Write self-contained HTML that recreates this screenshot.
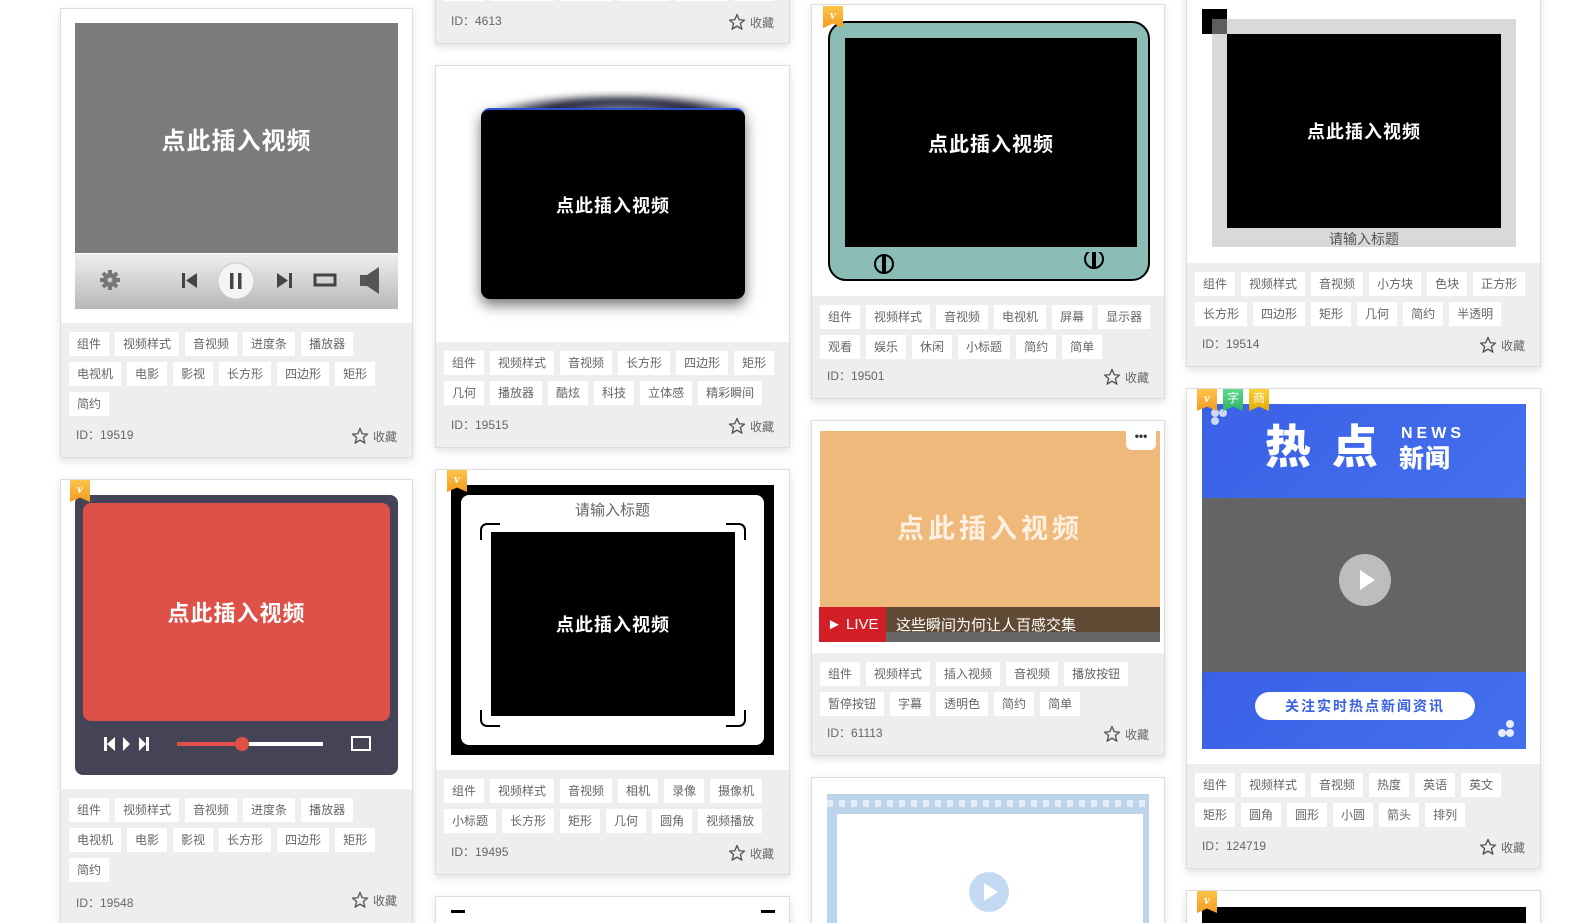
<!DOCTYPE html>
<html><head><meta charset="utf-8">
<style>
*{box-sizing:border-box;margin:0;padding:0}
html,body{width:1587px;height:923px;overflow:hidden;background:#fff}
body{font-family:"Liberation Sans","Noto Sans CJK SC",sans-serif}
#root{position:relative;width:1587px;height:923px;overflow:hidden}
.card{position:absolute;background:#fff;border:1px solid #ddd;box-shadow:0 3px 8px rgba(0,0,0,.12);overflow:hidden}
.ft{position:absolute;left:0;right:0;bottom:0;background:#eee;padding:9px 0 0 8px}
.ft span{float:left;background:#fff;height:24px;line-height:24px;padding:0 8px;margin:0 6px 6px 0;font-size:12px;color:#666}
.id{position:absolute;left:15px;bottom:14px;font-size:12px;color:#666}
.fav{position:absolute;right:15px;bottom:12px;font-size:12px;color:#666;display:flex;align-items:center;gap:4px}
.abs{position:absolute}
.vt{color:#fff;font-weight:bold;letter-spacing:1px;display:flex;align-items:center;justify-content:center}
.bdg{position:absolute;width:20px;height:22px;background:linear-gradient(#fcc34a,#f39c1f);clip-path:polygon(0 0,100% 0,100% 100%,50% 80%,0 100%);color:#fff;font:italic bold 13px/18px "Liberation Serif",serif;text-align:center}
</style></head><body><div id="root">

<div class="card" style="left:60px;top:8px;width:353px;height:450px">
  <div class="abs vt" style="left:14px;top:14px;width:323px;height:230px;background:#7b7b7b;font-size:24px">点此插入视频</div>
  <div class="abs" style="left:14px;top:245px;width:323px;height:55px;background:linear-gradient(#eeeeee,#b8b8b8)">
    <svg width="323" height="55" viewBox="0 0 323 55">
      <g fill="#777"><circle cx="35" cy="26" r="7"/><g stroke="#777" stroke-width="4"><line x1="35" y1="16" x2="35" y2="36"/><line x1="25" y1="26" x2="45" y2="26"/><line x1="28" y1="19" x2="42" y2="33"/><line x1="42" y1="19" x2="28" y2="33"/></g><circle cx="35" cy="26" r="2.5" fill="#ccc"/></g>
      <rect x="107" y="19" width="3" height="15" fill="#444"/><polygon points="122,19 122,34 111,26.5" fill="#444"/>
      <circle cx="161" cy="27" r="18" fill="#f4f4f4" stroke="#ccc"/><rect x="155" y="19" width="3.5" height="16" fill="#444"/><rect x="163" y="19" width="3.5" height="16" fill="#444"/>
      <polygon points="202,19 202,34 213,26.5" fill="#444"/><rect x="214" y="19" width="3" height="15" fill="#444"/>
      <rect x="240" y="21" width="20" height="10" fill="none" stroke="#444" stroke-width="3"/>
      <polygon points="285,21 292,21 304,13 304,40 292,32 285,32" fill="#555"/>
    </svg>
  </div>
  <div class="ft" style="top:314px"><span>组件</span><span>视频样式</span><span>音视频</span><span>进度条</span><span>播放器</span><span>电视机</span><span>电影</span><span>影视</span><span>长方形</span><span>四边形</span><span>矩形</span><span>简约</span></div>
  <div class="id">ID：19519</div>
  <div class="fav"><svg width="18" height="18" viewBox="0 0 24 24"><polygon points="12,2 15,9 22,9.5 16.5,14 18.5,21.5 12,17.5 5.5,21.5 7.5,14 2,9.5 9,9" fill="none" stroke="#555" stroke-width="1.8" stroke-linejoin="round"/></svg>收藏</div>
</div>

<div class="card" style="left:60px;top:479px;width:353px;height:450px">
  <div class="abs" style="left:14px;top:15px;width:323px;height:280px;background:#444456;border-radius:8px"></div>
  <div class="abs vt" style="left:22px;top:23px;width:307px;height:218px;background:#df5048;border-radius:8px;font-size:22px">点此插入视频</div>
  <svg class="abs" style="left:14px;top:245px" width="323" height="40" viewBox="0 0 323 40">
    <g fill="#fff"><rect x="29" y="12" width="3" height="14"/><polygon points="40,12 40,26 32,19"/><polygon points="48,12 48,26 55,19"/><polygon points="64,12 64,26 71,19"/><rect x="71" y="12" width="3" height="14"/></g>
    <rect x="102" y="17" width="66" height="4" fill="#df5048"/><rect x="168" y="17" width="80" height="4" fill="#fff"/><circle cx="167" cy="19" r="7" fill="#df5048"/>
    <rect x="277" y="12" width="18" height="13" fill="none" stroke="#fff" stroke-width="2"/>
  </svg>
  <div class="bdg" style="left:9px;top:0">v</div>
  <div class="ft" style="top:309px"><span>组件</span><span>视频样式</span><span>音视频</span><span>进度条</span><span>播放器</span><span>电视机</span><span>电影</span><span>影视</span><span>长方形</span><span>四边形</span><span>矩形</span><span>简约</span></div>
  <div class="id" style="bottom:auto;top:414px">ID：19548</div>
  <div class="fav" style="bottom:auto;top:411px"><svg width="18" height="18" viewBox="0 0 24 24"><polygon points="12,2 15,9 22,9.5 16.5,14 18.5,21.5 12,17.5 5.5,21.5 7.5,14 2,9.5 9,9" fill="none" stroke="#555" stroke-width="1.8" stroke-linejoin="round"/></svg>收藏</div>
</div>

<div class="card" style="left:435px;top:-60px;width:355px;height:104px">
  <div class="ft" style="top:0;padding-top:36px"><span>组件</span><span>视频样式</span><span>音视频</span><span>长方形</span><span>四边形</span><span>矩形</span></div>
  <div class="id">ID：4613</div>
  <div class="fav"><svg width="18" height="18" viewBox="0 0 24 24"><polygon points="12,2 15,9 22,9.5 16.5,14 18.5,21.5 12,17.5 5.5,21.5 7.5,14 2,9.5 9,9" fill="none" stroke="#555" stroke-width="1.8" stroke-linejoin="round"/></svg>收藏</div>
</div>

<div class="card" style="left:435px;top:65px;width:355px;height:383px">
  <div class="abs" style="left:60px;top:28px;width:250px;height:20px;background:radial-gradient(ellipse at 50% 100%,#c8d8ff 0,#1a1a30 45%,rgba(0,0,0,0) 75%);filter:blur(3px)"></div>
  <div class="abs vt" style="left:45px;top:42px;width:264px;height:191px;background:#000;border-radius:9px;box-shadow:0 6px 14px rgba(0,0,0,.55);border-top:2px solid #2d4fd0;font-size:18px">点此插入视频</div>
  <div class="ft" style="top:276px"><span>组件</span><span>视频样式</span><span>音视频</span><span>长方形</span><span>四边形</span><span>矩形</span><span>几何</span><span>播放器</span><span>酷炫</span><span>科技</span><span>立体感</span><span>精彩瞬间</span></div>
  <div class="id">ID：19515</div>
  <div class="fav"><svg width="18" height="18" viewBox="0 0 24 24"><polygon points="12,2 15,9 22,9.5 16.5,14 18.5,21.5 12,17.5 5.5,21.5 7.5,14 2,9.5 9,9" fill="none" stroke="#555" stroke-width="1.8" stroke-linejoin="round"/></svg>收藏</div>
</div>

<div class="card" style="left:435px;top:469px;width:355px;height:406px">
  <div class="abs" style="left:15px;top:15px;width:323px;height:270px;background:#000"></div>
  <div class="abs" style="left:25px;top:25px;width:303px;height:250px;background:#fff;border-radius:8px"></div>
  <div class="abs" style="left:25px;top:29px;width:303px;text-align:center;font-size:15px;color:#666">请输入标题</div>
  <svg class="abs" style="left:44px;top:52px" width="266" height="206" viewBox="0 0 266 206"><g fill="none" stroke="#000" stroke-width="2"><path d="M1 18V8a6 6 0 0 1 6-6h13"/><path d="M246 2h13a6 6 0 0 1 6 6v10"/><path d="M1 188v10a6 6 0 0 0 6 6h13"/><path d="M246 204h13a6 6 0 0 0 6-6v-10"/></g></svg>
  <div class="abs vt" style="left:55px;top:62px;width:244px;height:184px;background:#000;font-size:18px">点此插入视频</div>
  <div class="bdg" style="left:11px;top:0">v</div>
  <div class="ft" style="top:300px"><span>组件</span><span>视频样式</span><span>音视频</span><span>相机</span><span>录像</span><span>摄像机</span><span>小标题</span><span>长方形</span><span>矩形</span><span>几何</span><span>圆角</span><span>视频播放</span></div>
  <div class="id">ID：19495</div>
  <div class="fav"><svg width="18" height="18" viewBox="0 0 24 24"><polygon points="12,2 15,9 22,9.5 16.5,14 18.5,21.5 12,17.5 5.5,21.5 7.5,14 2,9.5 9,9" fill="none" stroke="#555" stroke-width="1.8" stroke-linejoin="round"/></svg>收藏</div>
</div>

<div class="card" style="left:435px;top:896px;width:355px;height:60px">
  <div class="abs" style="left:15px;top:13px;width:14px;height:3px;background:#000"></div>
  <div class="abs" style="left:325px;top:13px;width:14px;height:3px;background:#000"></div>
</div>

<div class="card" style="left:811px;top:4px;width:354px;height:395px">
  <div class="abs" style="left:16px;top:16px;width:322px;height:260px;background:#8bbdb6;border:2px solid #000;border-radius:18px"></div>
  <div class="abs vt" style="left:33px;top:33px;width:292px;height:209px;background:#000;font-size:20px">点此插入视频</div>
  <svg class="abs" style="left:60px;top:247px" width="240" height="26" viewBox="0 0 240 26"><g fill="none" stroke="#000" stroke-width="2"><circle cx="12" cy="12" r="9"/><line x1="12" y1="3" x2="12" y2="21" stroke-width="4"/><circle cx="222" cy="7" r="9"/><line x1="222" y1="-2" x2="222" y2="16" stroke-width="4"/></g></svg>
  <div class="bdg" style="left:11px;top:1px">v</div>
  <div class="ft" style="top:291px"><span>组件</span><span>视频样式</span><span>音视频</span><span>电视机</span><span>屏幕</span><span>显示器</span><span>观看</span><span>娱乐</span><span>休闲</span><span>小标题</span><span>简约</span><span>简单</span></div>
  <div class="id">ID：19501</div>
  <div class="fav"><svg width="18" height="18" viewBox="0 0 24 24"><polygon points="12,2 15,9 22,9.5 16.5,14 18.5,21.5 12,17.5 5.5,21.5 7.5,14 2,9.5 9,9" fill="none" stroke="#555" stroke-width="1.8" stroke-linejoin="round"/></svg>收藏</div>
</div>

<div class="card" style="left:811px;top:420px;width:354px;height:336px">
  <div class="abs vt" style="left:8px;top:10px;width:340px;height:210px;background:#f0b97c;font-size:27px;color:#fdf0e0;letter-spacing:4px;padding-bottom:20px">点此插入视频</div>
  <div class="abs" style="left:8px;top:186px;width:340px;height:25px;background:#604a33"></div>
  <div class="abs" style="left:8px;top:211px;width:340px;height:10px;background:#676767"></div>
  <div class="abs" style="left:7px;top:186px;width:67px;height:35px;background:#d21f27;color:#fff;font-size:15px;line-height:36px;padding-left:8px">&#9658; LIVE</div>
  <div class="abs" style="left:84px;top:193px;color:#fff;font-size:15px">这些瞬间为何让人百感交集</div>
  <div class="abs" style="left:314px;top:5px;width:30px;height:24px;background:#fff;border-radius:6px;text-align:center;font-size:12px;line-height:20px;color:#333;font-weight:bold">•••</div>
  <div class="ft" style="top:232px"><span>组件</span><span>视频样式</span><span>插入视频</span><span>音视频</span><span>播放按钮</span><span>暂停按钮</span><span>字幕</span><span>透明色</span><span>简约</span><span>简单</span></div>
  <div class="id">ID：61113</div>
  <div class="fav"><svg width="18" height="18" viewBox="0 0 24 24"><polygon points="12,2 15,9 22,9.5 16.5,14 18.5,21.5 12,17.5 5.5,21.5 7.5,14 2,9.5 9,9" fill="none" stroke="#555" stroke-width="1.8" stroke-linejoin="round"/></svg>收藏</div>
</div>

<div class="card" style="left:811px;top:777px;width:354px;height:160px">
  <div class="abs" style="left:15px;top:16px;width:322px;height:140px;background:#bcd3ea"></div>
  <div class="abs" style="left:15px;top:22px;width:322px;height:7px;background:repeating-linear-gradient(90deg,#e4edf7 0 6px,transparent 6px 12px)"></div>
  <div class="abs" style="left:25px;top:36px;width:306px;height:130px;background:#fff"></div>
  <svg class="abs" style="left:156px;top:93px" width="42" height="42" viewBox="0 0 42 42"><circle cx="21" cy="21" r="20" fill="#c4daf2"/><polygon points="16,12 16,30 30,21" fill="#fff"/></svg>
</div>

<div class="card" style="left:1186px;top:-10px;width:355px;height:377px">
  <div class="abs" style="left:25px;top:28px;width:304px;height:228px;background:#d9d9d9"></div>
  <div class="abs" style="left:15px;top:18px;width:25px;height:25px;background:#000"></div>
  <div class="abs" style="left:25px;top:28px;width:15px;height:15px;background:#5e5e5e"></div>
  <div class="abs vt" style="left:40px;top:43px;width:274px;height:194px;background:#000;font-size:18px">点此插入视频</div>
  <div class="abs" style="left:25px;top:238px;width:304px;text-align:center;font-size:14px;color:#555">请输入标题</div>
  <div class="ft" style="top:272px"><span>组件</span><span>视频样式</span><span>音视频</span><span>小方块</span><span>色块</span><span>正方形</span><span>长方形</span><span>四边形</span><span>矩形</span><span>几何</span><span>简约</span><span>半透明</span></div>
  <div class="id">ID：19514</div>
  <div class="fav"><svg width="18" height="18" viewBox="0 0 24 24"><polygon points="12,2 15,9 22,9.5 16.5,14 18.5,21.5 12,17.5 5.5,21.5 7.5,14 2,9.5 9,9" fill="none" stroke="#555" stroke-width="1.8" stroke-linejoin="round"/></svg>收藏</div>
</div>

<div class="card" style="left:1186px;top:388px;width:355px;height:481px">
  <div class="abs" style="left:15px;top:15px;width:324px;height:94px;background:linear-gradient(135deg,#3a60e6,#4470ee)"></div>
  <div class="abs" style="left:15px;top:109px;width:324px;height:174px;background:#646464"></div>
  <div class="abs" style="left:15px;top:283px;width:324px;height:77px;background:linear-gradient(135deg,#3a60e6,#4470ee)"></div>
  <div class="abs" style="left:78px;top:30px;color:#fff;font-size:46px;font-weight:900;letter-spacing:4px;line-height:56px">热 点</div>
  <div class="abs" style="left:214px;top:36px;color:#fff;font-size:16px;font-weight:bold;letter-spacing:4px;line-height:18px">NEWS</div>
  <div class="abs" style="left:212px;top:55px;color:#fff;font-size:25px;font-weight:900;letter-spacing:1px;line-height:30px">新闻</div>
  <svg class="abs" style="left:23px;top:19px" width="22" height="22"><circle cx="5" cy="5" r="4" fill="#cdd8f8"/><circle cx="13" cy="5" r="4" fill="#cdd8f8"/><circle cx="5" cy="13" r="4" fill="#cdd8f8"/></svg>
  <svg class="abs" style="left:309px;top:330px" width="22" height="22"><circle cx="14" cy="5" r="4" fill="#e6ecfc"/><circle cx="6" cy="14" r="4" fill="#e6ecfc"/><circle cx="14" cy="14" r="4" fill="#e6ecfc"/></svg>
  <svg class="abs" style="left:151px;top:164px" width="54" height="54"><circle cx="27" cy="27" r="26" fill="#bdbdbd"/><polygon points="22,17 22,37 37,27" fill="#fff"/></svg>
  <div class="abs" style="left:68px;top:303px;width:220px;height:28px;background:#fff;border-radius:14px;text-align:center;color:#3a60e6;font-size:14px;font-weight:bold;line-height:28px;letter-spacing:2px">关注实时热点新闻资讯</div>
  <div class="bdg" style="left:10px;top:0">v</div>
  <div class="bdg" style="left:36px;top:0;background:linear-gradient(#5fd88d,#2fb268);font:12px/18px 'Noto Sans CJK SC',sans-serif">字</div>
  <div class="bdg" style="left:62px;top:0;background:linear-gradient(#f9d03a,#e5a800);font:12px/18px 'Noto Sans CJK SC',sans-serif">商</div>
  <div class="ft" style="top:375px"><span>组件</span><span>视频样式</span><span>音视频</span><span>热度</span><span>英语</span><span>英文</span><span>矩形</span><span>圆角</span><span>圆形</span><span>小圆</span><span>箭头</span><span>排列</span></div>
  <div class="id">ID：124719</div>
  <div class="fav"><svg width="18" height="18" viewBox="0 0 24 24"><polygon points="12,2 15,9 22,9.5 16.5,14 18.5,21.5 12,17.5 5.5,21.5 7.5,14 2,9.5 9,9" fill="none" stroke="#555" stroke-width="1.8" stroke-linejoin="round"/></svg>收藏</div>
</div>

<div class="card" style="left:1186px;top:890px;width:355px;height:60px">
  <div class="abs" style="left:15px;top:16px;width:324px;height:30px;background:#000"></div>
  <div class="bdg" style="left:10px;top:0">v</div>
</div>

</div></body></html>
